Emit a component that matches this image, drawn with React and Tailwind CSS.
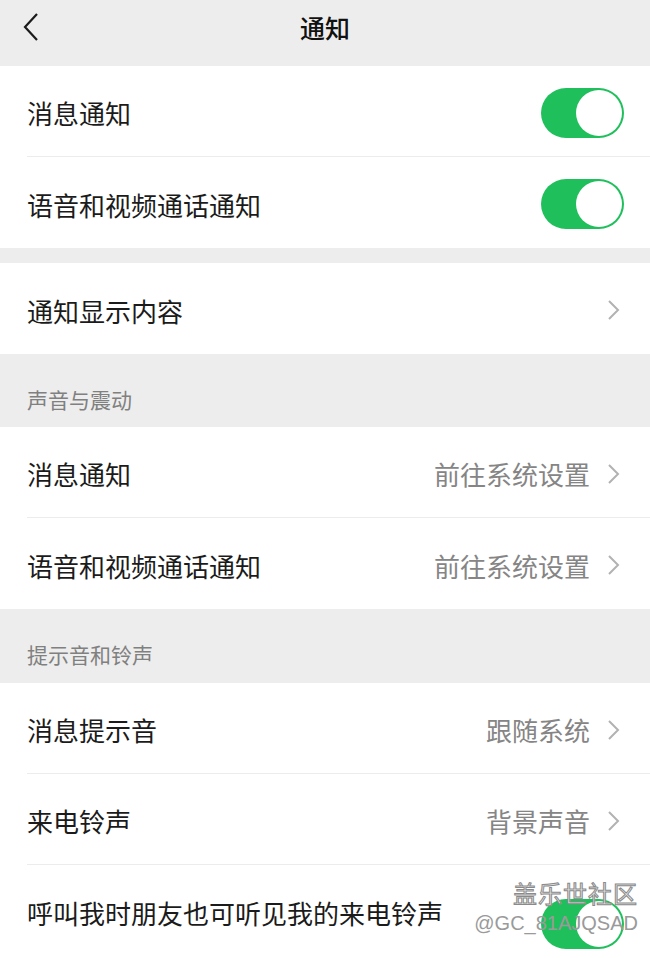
import React from "react";

const font = { fontFamily: '"Noto Sans CJK SC", "Noto Sans", sans-serif' };

function Toggle({ low }) {
  return (
    <div
      className={
        "w-[83px] h-[50px] rounded-full bg-[#1fbf5c] flex items-center justify-end pr-[2px] " +
        (low ? "mt-[22px]" : "")
      }
    >
      <div className="w-[46px] h-[46px] rounded-full bg-white" />
    </div>
  );
}

function Chevron() {
  return (
    <svg width="14" height="22" viewBox="0 0 14 22" className="ml-[17px] mr-[3px]">
      <path d="M2 2 L11 11 L2 20" fill="none" stroke="#b2b2b2" strokeWidth="2" />
    </svg>
  );
}

function Row({ label, value, toggle, chevron, divider, last }) {
  return (
    <div className={"bg-white pl-[27px] " + (last ? "flex-1 flex" : "")}>
      <div
        className={
          "flex items-center pr-[26px] " +
          (last ? "flex-1 pt-[2px]" : "h-[91px] pt-[3px] ") +
          (divider ? "border-b border-[#ececec]" : "")
        }
      >
        <span className="text-[26px] text-[#1b1b1b] flex-1">{label}</span>
        {value && <span className="text-[26px] text-[#858585]">{value}</span>}
        {chevron && <Chevron />}
        {toggle && <Toggle low={last} />}
      </div>
    </div>
  );
}

function Section({ title, h }) {
  return (
    <div className={"bg-[#ededed] flex items-center pl-[27px] pt-[18px] " + h}>
      <span className="text-[21px] text-[#808080]">{title}</span>
    </div>
  );
}

export default function App() {
  return (
    <div className="w-[650px] h-[958px] bg-[#ededed] overflow-hidden relative flex flex-col" style={font}>
      <div className="h-[66px] shrink-0 flex items-start justify-center pt-[9px] relative">
        <svg width="20" height="30" viewBox="0 0 20 30" className="absolute left-[22px] top-[12px]">
          <path d="M15 2 L3 15 L15 28" fill="none" stroke="#1b1b1b" strokeWidth="2.2" />
        </svg>
        <span className="text-[25px] text-[#111] font-medium">通知</span>
      </div>

      <Row label="消息通知" toggle divider />
      <Row label="语音和视频通话通知" toggle />

      <div className="h-[15px] shrink-0" />
      <Row label="通知显示内容" chevron />

      <Section title="声音与震动" h="h-[73px]" />
      <Row label="消息通知" value="前往系统设置" chevron divider />
      <Row label="语音和视频通话通知" value="前往系统设置" chevron />

      <Section title="提示音和铃声" h="h-[74px]" />
      <Row label="消息提示音" value="跟随系统" chevron divider />
      <Row label="来电铃声" value="背景声音" chevron divider />
      <Row label="呼叫我时朋友也可听见我的来电铃声" toggle last />

      <div className="absolute right-[12px] top-[881px] flex flex-col items-end leading-none">
        <span
          className="text-[24px] text-[#e8e8e8] tracking-[1px]"
          style={{ WebkitTextStroke: "1px #8a8a8a" }}
        >
          盖乐世社区
        </span>
        <span className="text-[20px] text-[#9a9a9a] mt-[8px]" style={{ fontFamily: '"Liberation Sans", sans-serif' }}>
          @GC_81AJQSAD
        </span>
      </div>
    </div>
  );
}
